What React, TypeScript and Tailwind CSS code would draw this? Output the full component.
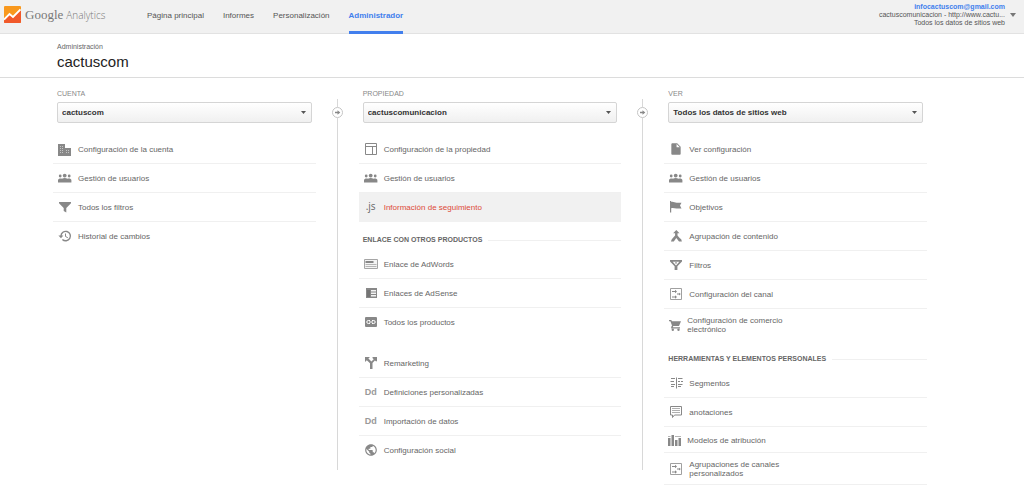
import type { ReactNode } from 'react';
import clsx from 'clsx';
import { MdInsertDriveFile, MdPublic } from 'react-icons/md';

type Item = {
  label: string;
  icon: ReactNode;
  active?: boolean;
  last?: boolean;
  narrow?: boolean;
  spaced?: boolean;
};

type Section = {
  title?: string;
  items: Item[];
};

type ColumnProps = {
  id: string;
  title: string;
  value: string;
  sections: Section[];
};

function Glyph({ children }: { children: ReactNode }) {
  return (
    <svg viewBox="0 0 16 16" className="w-4 h-4" fill="currentColor" aria-hidden="true">
      {children}
    </svg>
  );
}

const BuildingIcon = () => (
  <Glyph>
    <path d="M1 3h7v4h6v8H1z" />
    <path d="M3 5h1v1H3zM5 5h1v1H5zM3 7h1v1H3zM5 7h1v1H5zM3 9h1v1H3zM5 9h1v1H5zM3 11h1v1H3zM5 11h1v1H5zM9 9h1v1H9zM11 9h1v1h-1zM9 11h1v1H9zM11 11h1v1h-1z" fill="#c4c4c4" />
  </Glyph>
);

const UsersIcon = () => (
  <Glyph>
    <circle cx="3.2" cy="6" r="1.4" />
    <circle cx="7.7" cy="5.6" r="1.9" />
    <circle cx="12.2" cy="6" r="1.4" />
    <path d="M1 12.5v-2.2C1 9 2.2 8.4 3.6 8.4c.5 0 1 .1 1.4.3.7-.4 1.7-.6 2.7-.6s2 .2 2.7.6c.4-.2.9-.3 1.4-.3 1.4 0 2.6.6 2.6 1.9v2.2z" />
  </Glyph>
);

const FunnelIcon = () => (
  <Glyph>
    <path d="M2 3h12v1.2L9.300 9v4.500l-2.600-1.500V9L2 4.200z" />
  </Glyph>
);

const FunnelOutlineIcon = () => (
  <Glyph>
    <path fillRule="evenodd" d="M2 3h12v1.600L9.400 9.200V13H6.600V9.200L2 4.600zM4.700 4.800 8 8.400l3.300-3.600z" />
    <circle cx="8" cy="5.900" r=".8" />
  </Glyph>
);

const HistoryIcon = () => (
  <Glyph>
    <path d="M4 8a4.700 4.700 0 1 1 1.400 3.400" fill="none" stroke="currentColor" strokeWidth="1.400" />
    <path d="M1.400 7.500h5L4 10.300z" />
    <path d="M8.500 5.500v3l2.300 1.200" fill="none" stroke="currentColor" />
  </Glyph>
);

const CartIcon = () => (
  <Glyph>
    <path d="M2 3h2.300l.6 1.200H14L12 9H6.300l-.5 1.200H13v1.300H4.200V10l.8-1.500L3.400 4.300H2z" />
    <circle cx="5.800" cy="12.800" r="1.200" />
    <circle cx="11.500" cy="12.800" r="1.200" />
  </Glyph>
);

const LayoutIcon = () => (
  <Glyph>
    <path d="M2.500 2.500h11v11h-11zM2.500 5.500h11M9.500 5.500v8" fill="none" stroke="currentColor" />
  </Glyph>
);

const AdWordsIcon = () => (
  <Glyph>
    <path d="M1.500 3.500h13v9h-13z" fill="#f4f4f4" stroke="#a5a5a5" />
    <path d="M2.500 5h8v2h-8z" />
    <path d="M2.500 8.500h11M2.500 10.500h11" stroke="#b5b5b5" fill="none" />
  </Glyph>
);

const AdSenseIcon = () => (
  <Glyph>
    <path d="M3 3h11v10H3z" />
    <path d="M8 5h5v1.500H8zM8 7.500h5V9H8zM8 10h5v1.500H8z" fill="#f4f4f4" />
    <path d="M4 5h3v7H4z" fill="#747474" />
  </Glyph>
);

const LinkIcon = () => (
  <Glyph>
    <rect x="2" y="3" width="12" height="10" rx="1" />
    <path d="M7 6.500H5.300a1.500 1.500 0 0 0 0 3H7M9 6.500h1.700a1.500 1.500 0 0 1 0 3H9M6 8h4" fill="none" stroke="#fff" />
  </Glyph>
);

const FlagIcon = () => (
  <Glyph>
    <path d="M2 2h1.200v11.500H2zM3.200 3c2-.6 3.600.8 5.500.8H13.500l-1.500 2.700 1.500 2.900H8.500c-2 0-3.300-.8-5.300-.2z" />
  </Glyph>
);

const SplitIcon = () => (
  <Glyph>
    <path d="M2 2h5L5.400 3.600l3 3 2.300-2.300L9.200 2.800 10 2h4v4l-.8.600-1.300-1.200-2.400 2.700V14H7V8.300L3.800 5.200 2 7z" />
  </Glyph>
);

const MergeIcon = () => (
  <Glyph>
    <path d="M8.300 2 11.500 5.200H9.500v2.300l2.400 2.700 1.300 1 .7 2.300h-2.900L8.300 9.900l-2.500 3.600H2.900l.9-2.300 3.300-3.700V5.200H5.100z" />
  </Glyph>
);

const ChannelIcon = () => (
  <Glyph>
    <path d="M2.500 2.500h11v11h-11z" fill="none" stroke="#a0a0a0" />
    <path d="M4 5h3V3.700L9 5.500 7 7.200V6H4zM9 7.500h2V6.700L12.800 8 11 9.400v-.9H9zM4 10.500h3V9.300L9 11l-2 1.700v-1.200H4z" />
  </Glyph>
);

const SegmentsIcon = () => (
  <Glyph>
    <path d="M3 3.500h4M2.500 6.500h3.500M3 9.500h4M10 3.500h4.500M10 6.500h2M13 6.500h2M10 9.500h4.500M3 11.500h3M10 11.500h3M8.500 2.500v11" fill="none" stroke="currentColor" />
  </Glyph>
);

const NoteIcon = () => (
  <Glyph>
    <path d="M2.500 2.500h11v8.500H6.500L4.500 13.500V11h-2z" fill="none" stroke="currentColor" />
    <path d="M4 4.500h8M4 6.500h8M4 8.500h8" fill="none" stroke="#b0b0b0" />
  </Glyph>
);

const BarsIcon = () => (
  <Glyph>
    <path d="M1 6h2.500v8H1zM4.500 3H7v11H4.500zM8 8h2.500v6H8zM11.500 6H14v8h-2.500z" />
    <path d="M1 4.500h2.500M8 4.500h6" fill="none" stroke="#b5b5b5" />
  </Glyph>
);

const DdIcon = () => <span className="block text-[9px] leading-none font-bold text-[#999]">Dd</span>;

const JsIcon = () => (
  <span className="block pb-0.5 font-['Open_Sans',sans-serif] text-[10px] leading-none text-[#666]">.js</span>
);

const ACCOUNT: Section[] = [
  {
    items: [
      { label: 'Configuración de la cuenta', icon: <BuildingIcon /> },
      { label: 'Gestión de usuarios', icon: <UsersIcon /> },
      { label: 'Todos los filtros', icon: <FunnelIcon /> },
      { label: 'Historial de cambios', icon: <HistoryIcon />, last: true },
    ],
  },
];

const PROPERTY: Section[] = [
  {
    items: [
      { label: 'Configuración de la propiedad', icon: <LayoutIcon /> },
      { label: 'Gestión de usuarios', icon: <UsersIcon /> },
      { label: 'Información de seguimiento', icon: <JsIcon />, active: true },
    ],
  },
  {
    title: 'Enlace con otros productos',
    items: [
      { label: 'Enlace de AdWords', icon: <AdWordsIcon /> },
      { label: 'Enlaces de AdSense', icon: <AdSenseIcon /> },
      { label: 'Todos los productos', icon: <LinkIcon />, last: true },
      { label: 'Remarketing', icon: <SplitIcon />, spaced: true },
      { label: 'Definiciones personalizadas', icon: <DdIcon /> },
      { label: 'Importación de datos', icon: <DdIcon /> },
      { label: 'Configuración social', icon: <MdPublic className="w-3.5 h-3.5" />, last: true },
    ],
  },
];

const VIEW: Section[] = [
  {
    items: [
      { label: 'Ver configuración', icon: <MdInsertDriveFile className="w-3.5 h-3.5" /> },
      { label: 'Gestión de usuarios', icon: <UsersIcon /> },
      { label: 'Objetivos', icon: <FlagIcon /> },
      { label: 'Agrupación de contenido', icon: <MergeIcon /> },
      { label: 'Filtros', icon: <FunnelOutlineIcon /> },
      { label: 'Configuración del canal', icon: <ChannelIcon /> },
      { label: 'Configuración de comercio electrónico', icon: <CartIcon />, narrow: true, last: true },
    ],
  },
  {
    title: 'Herramientas y elementos personales',
    items: [
      { label: 'Segmentos', icon: <SegmentsIcon /> },
      { label: 'anotaciones', icon: <NoteIcon /> },
      { label: 'Modelos de atribución', icon: <BarsIcon />, narrow: true },
      { label: 'Agrupaciones de canales personalizados', icon: <ChannelIcon /> },
    ],
  },
];

function MenuRow({ label, icon, active, last, narrow, spaced }: Item) {
  return (
    <li className={clsx(spaced && 'mt-3')}>
      <a
        href="#"
        className={clsx(
          'flex items-center gap-[5px] pl-1 pt-[7px] pb-[6px] border-b leading-[9px]',
          narrow ? 'min-h-[26px]' : 'min-h-[29px]',
          active ? 'bg-[#f1f1f1] text-[#dd4b39]' : 'text-[#666]',
          last || active ? 'border-transparent' : 'border-[#f0f0f0]',
        )}
      >
        <span
          className={clsx(
            'h-2 mb-px shrink-0 flex items-center justify-center text-[#888]',
            narrow ? 'w-[14px]' : 'w-4',
          )}
        >
          <span className="shrink-0">{icon}</span>
        </span>
        <span className="max-w-[112px]">{label}</span>
      </a>
    </li>
  );
}

function Column({ id, title, value, sections }: ColumnProps) {
  return (
    <section>
      <div className="px-1">
        <label htmlFor={id} className="block text-[7px] leading-[8px] text-[#888]">
          {title}
        </label>
        <div className="relative mt-1">
          <select
            id={id}
            defaultValue={value}
            className="block w-full h-[21px] appearance-none rounded-xs border border-[#d5d5d5] bg-linear-to-b from-white to-[#f0f0f0] pl-1 pr-5 text-[8px] font-bold text-[#333]"
          >
            <option>{value}</option>
          </select>
          <svg viewBox="0 0 5 3" className="absolute right-[6px] top-[9px] w-[5px] h-[3px] pointer-events-none" fill="#555">
            <path d="M0 0h5L2.500 3z" />
          </svg>
        </div>
      </div>
      <div className="mt-3">
        {sections.map((section, i) => (
          <div key={i}>
            {section.title && (
              <h2 className="flex items-center gap-[6px] h-7 pl-1 pt-2 text-[7px] font-bold uppercase text-[#666]">
                {section.title}
                <span className="flex-1 border-t border-[#f0f0f0]" />
              </h2>
            )}
            <ul>
              {section.items.map((item) => (
                <MenuRow key={item.label} {...item} />
              ))}
            </ul>
          </div>
        ))}
      </div>
    </section>
  );
}

function Divider() {
  return (
    <div className="mt-[9px] h-[371px] flex flex-col items-center">
      <div className="h-2 w-px bg-[#d8d8d8]" />
      <svg viewBox="0 0 11 11" className="w-[11px] h-[11px] shrink-0" aria-hidden="true">
        <circle cx="5.500" cy="5.500" r="5" fill="#fff" stroke="#c4c4c4" />
        <path d="M3 4.700h2.500V3.200L8.300 5.500 5.500 7.800V6.300H3z" fill="#888" />
      </svg>
      <div className="flex-1 w-px bg-[#d8d8d8]" />
    </div>
  );
}

function Logo() {
  return (
    <a href="#" className="flex items-center w-[143px] shrink-0">
      <svg viewBox="0 0 17 17" className="w-[17px] h-[17px]" aria-hidden="true">
        <rect width="17" height="17" rx="1" fill="#f8981d" />
        <path d="M0 14.500 5.500 9l3.500 3 8-8v12a1 1 0 0 1-1 1H1a1 1 0 0 1-1-1z" fill="#f1592a" />
        <path d="M0 13.500 5.500 8l3.500 3 7.500-7.500" fill="none" stroke="#fff" strokeWidth="1.800" />
      </svg>
      <span className="ml-1 font-['Liberation_Serif',serif] text-[13px] leading-none text-[#777]">Google</span>
      <span className="ml-[3px] font-['Open_Sans',sans-serif] text-[10px] leading-none font-light text-[#777]">Analytics</span>
    </a>
  );
}

const NAV = ['Página principal', 'Informes', 'Personalización', 'Administrador'];

export default function App() {
  return (
    <div className="bg-white font-['Liberation_Sans',Arial,sans-serif] text-[8px] text-[#666]">
      <header className="flex h-[34px] pl-1 pr-2 bg-[#f1f1f1] border-b border-[#e2e2e2]">
        <div className="flex items-center pb-1">
          <Logo />
        </div>
        <nav className="flex gap-[19px] -mb-px">
          {NAV.map((name) => (
            <a
              key={name}
              href="#"
              className={clsx(
                'flex items-center pt-px border-b-3',
                name === 'Administrador' ? 'border-[#427fed] font-bold text-[#427fed]' : 'border-transparent text-[#555]',
              )}
            >
              {name}
            </a>
          ))}
        </nav>
        <button className="ml-auto flex items-center gap-[5px] pb-1 text-right text-[7px] leading-[8px] text-[#555]">
          <span>
            <span className="block font-bold text-[#427fed]">infocactuscom@gmail.com</span>
            <span className="block">cactuscomunicacion - http://www.cactu...</span>
            <span className="block">Todos los datos de sitios web</span>
          </span>
          <svg viewBox="0 0 6 4" className="w-[6px] h-[4px]" fill="#777">
            <path d="M0 0h6L3 4z" />
          </svg>
        </button>
      </header>

      <div className="pt-2 pl-[57px] h-11 border-b border-[#dcdcdc]">
        <div className="text-[7px] leading-[9px]">Administración</div>
        <h1 className="mt-px text-[15px] leading-[19px] text-[#222]">cactuscom</h1>
      </div>

      <main className="grid grid-cols-[1fr_43px_1fr_43px_1fr] pt-3 pl-[53px] pr-[97px]">
        <Column id="account" title="CUENTA" value="cactuscom" sections={ACCOUNT} />
        <Divider />
        <Column id="property" title="PROPIEDAD" value="cactuscomunicacion" sections={PROPERTY} />
        <Divider />
        <Column id="view" title="VER" value="Todos los datos de sitios web" sections={VIEW} />
      </main>
    </div>
  );
}
